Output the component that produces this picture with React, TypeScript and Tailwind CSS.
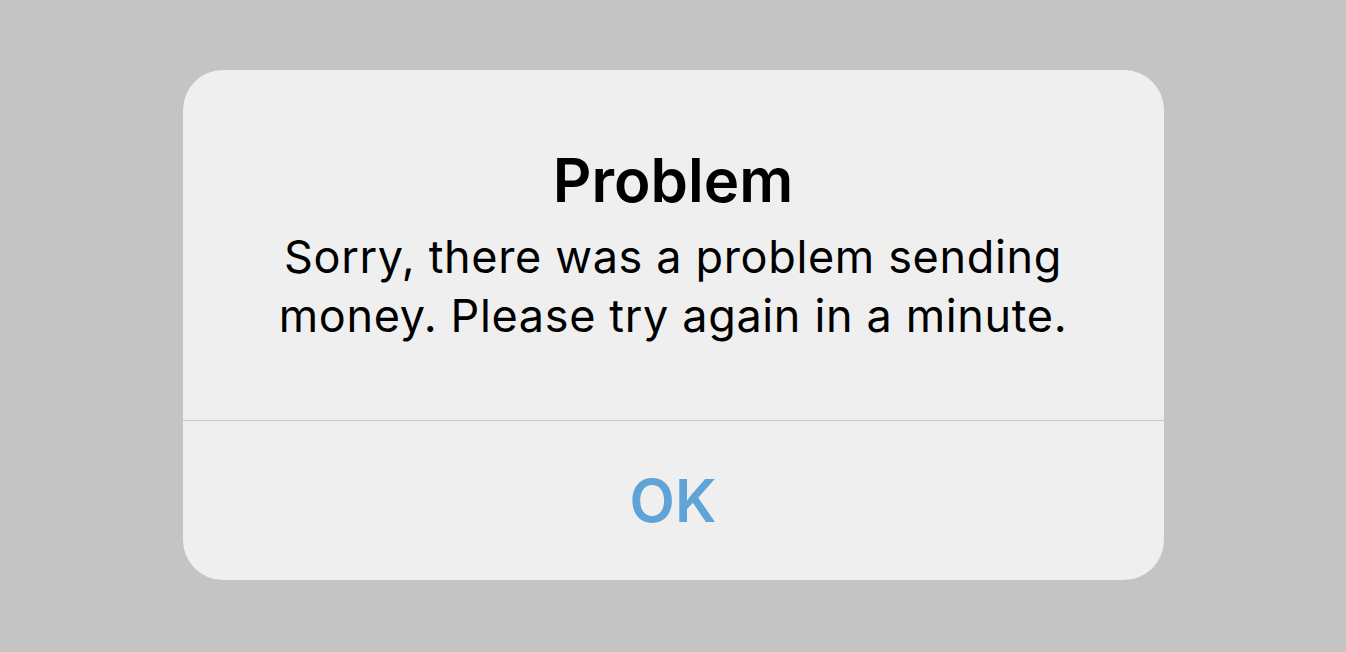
export default function App() {
  return (
    <div
      className="w-[1346px] h-[652px] bg-[#c4c4c4] flex items-start justify-center pt-[70px]"
      style={{ fontFamily: 'Inter, "Liberation Sans", sans-serif' }}
    >
      <div className="w-[981px] h-[510px] rounded-[40px] bg-[#efefef] flex flex-col overflow-hidden">
        <div className="h-[350px] flex flex-col items-center pt-[74px]">
          <div className="text-[60px] leading-[72px] font-semibold text-black">Problem</div>
          <div className="mt-[11px] text-[45px] leading-[59px] tracking-[0.65px] text-black text-center">
            Sorry, there was a problem sending
            <br />
            money. Please try again in a minute.
          </div>
        </div>
        <div className="h-px bg-[#c6c6c6]" />
        <div className="flex-1 flex items-center justify-center">
          <span className="text-[59px] leading-[72px] font-semibold text-[#5fa3d7]">OK</span>
        </div>
      </div>
    </div>
  );
}
